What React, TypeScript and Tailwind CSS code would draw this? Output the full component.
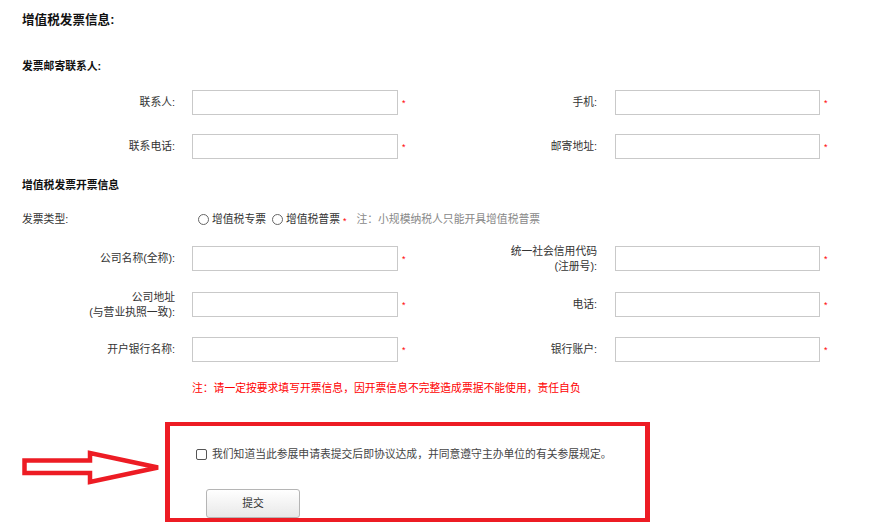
import React from 'react';

const font = "font-['Liberation_Sans','Noto_Sans_CJK_SC',sans-serif]";

type Row = { left: string[]; right: string[]; mt: string };

const mailRows: Row[] = [
  { left: ['联系人:'], right: ['手机:'], mt: 'mt-[16px]' },
  { left: ['联系电话:'], right: ['邮寄地址:'], mt: 'mt-[19px]' },
];

const invoiceRows: Row[] = [
  { left: ['公司名称(全称):'], right: ['统一社会信用代码', '(注册号):'], mt: 'mt-[19px]' },
  { left: ['公司地址', '(与营业执照一致):'], right: ['电话:'], mt: 'mt-[21px]' },
  { left: ['开户银行名称:'], right: ['银行账户:'], mt: 'mt-[20px]' },
];

const Label: React.FC<{ lines: string[]; width: string }> = ({ lines, width }) => (
  <div className={`${width} shrink-0 text-right text-[10.8px] leading-[15px] text-[#333]`}>
    {lines.map((l) => (
      <div key={l}>{l}</div>
    ))}
  </div>
);

const Star: React.FC<{ width: string }> = ({ width }) => (
  <span className={`${width} shrink-0 pl-[4px] pt-[2px] text-[9px] leading-[9px] text-[#f00]`}>*</span>
);

const Input: React.FC<{ width: string }> = ({ width }) => (
  <div className={`${width} h-[25px] shrink-0 border border-[#c9c9c9] bg-white`} />
);

const FormRow: React.FC<{ row: Row }> = ({ row }) => (
  <div className={`flex h-[25px] items-center ${row.mt}`}>
    <Label lines={row.left} width="w-[175px]" />
    <div className="w-[17px] shrink-0" />
    <Input width="w-[206px]" />
    <Star width="w-[22px]" />
    <Label lines={row.right} width="w-[177px]" />
    <div className="w-[18px] shrink-0" />
    <Input width="w-[205px]" />
    <Star width="w-[20px]" />
  </div>
);

const Radio: React.FC<{ label: string }> = ({ label }) => (
  <span className="flex items-center gap-[3px]">
    <span className="h-[11px] w-[11px] rounded-full border border-[#666] bg-white" />
    <span>{label}</span>
  </span>
);

export default function App() {
  return (
    <div className={`relative h-[524px] w-[869px] overflow-hidden bg-white ${font}`}>
      <div className="pt-[12px] pl-[22px] text-[12.6px] font-bold leading-[16px] text-[#111]">增值税发票信息:</div>
      <div className="mt-[30px] pl-[22px] text-[10.8px] font-bold leading-[16px] text-[#111]">发票邮寄联系人:</div>

      {mailRows.map((r) => (
        <FormRow key={r.left[0]} row={r} />
      ))}

      <div className="mt-[18px] pl-[22px] text-[10.8px] font-bold leading-[16px] text-[#111]">增值税发票开票信息</div>

      <div className="mt-[18px] flex h-[16px] items-center text-[10.8px] text-[#333]">
        <div className="w-[198px] shrink-0 pl-[22px]">发票类型:</div>
        <div className="flex items-center gap-[6px]">
          <Radio label="增值税专票" />
          <Radio label="增值税普票" />
        </div>
        <span className="ml-[3px] pt-[4px] text-[9px] leading-[9px] text-[#f00]">*</span>
        <span className="ml-[10px] text-[#888]">注：小规模纳税人只能开具增值税普票</span>
      </div>

      {invoiceRows.map((r) => (
        <FormRow key={r.left[0]} row={r} />
      ))}

      <div className="mt-[18px] pl-[192px] text-[10.8px] leading-[16px] text-[#f00]">
        注：请一定按要求填写开票信息，因开票信息不完整造成票据不能使用，责任自负
      </div>

      <div className="mt-[26px] flex items-start">
        <svg className="mt-[27px] ml-[22px] shrink-0" width="143" height="36" viewBox="0 0 143 36">
          <path
            d="M2.5 11.5 H68 V4 L136 18.5 L68 33 V24 H2.5 Z"
            fill="none"
            stroke="#ed1c24"
            strokeWidth="4.5"
            strokeLinejoin="miter"
            strokeMiterlimit="3"
          />
        </svg>
        <div className="h-[100px] w-[485px] shrink-0 border-x-[5px] border-y-4 border-[#ed1c24] pt-[23px] pl-[26px]">
          <div className="flex h-[11px] items-center gap-[5px] text-[10.8px] text-[#444]">
            <span className="h-[11px] w-[11px] shrink-0 rounded-[2px] border border-[#555] bg-white" />
            <span>我们知道当此参展申请表提交后即协议达成，并同意遵守主办单位的有关参展规定。</span>
          </div>
          <button className="mt-[29px] ml-[10px] flex h-[29px] w-[94px] items-center justify-center rounded-[3px] border border-[#b5b5b5] bg-gradient-to-b from-white to-[#e8e8e8] text-[10.8px] text-[#333]">
            提交
          </button>
        </div>
      </div>
    </div>
  );
}
